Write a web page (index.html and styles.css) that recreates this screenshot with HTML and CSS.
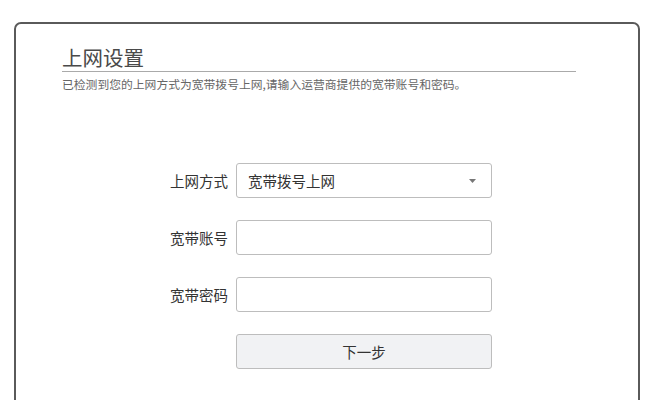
FILE: index.html
```html
<!DOCTYPE html>
<html lang="zh">
<head>
<meta charset="utf-8">
<link rel="stylesheet" href="styles.css">
</head>
<body>
<div class="card">
  <div class="header">
    <h1 class="title">上网设置</h1>
    <p class="subtitle">已检测到您的上网方式为宽带拨号上网,请输入运营商提供的宽带账号和密码。</p>
  </div>
  <div class="form">
    <div class="row">
      <span class="label">上网方式</span>
      <div class="field select">
        <span>宽带拨号上网</span>
        <svg class="arrow" width="7" height="4" viewBox="0 0 7 4"><path d="M0 0h7L3.5 4z" fill="#777"/></svg>
      </div>
    </div>
    <div class="row">
      <span class="label">宽带账号</span>
      <div class="field"></div>
    </div>
    <div class="row">
      <span class="label">宽带密码</span>
      <div class="field"></div>
    </div>
    <div class="row">
      <span class="label"></span>
      <div class="field button">下一步</div>
    </div>
  </div>
</div>
</body>
</html>
```

FILE: styles.css
```css
html, body {
  margin: 0;
  padding: 0;
  background: #fff;
  height: 400px;
  overflow: hidden;
}
body {
  font-family: "Noto Sans CJK SC", "Noto Sans", sans-serif;
  padding: 22px 19px 0 14px;
}
.card {
  border: 2px solid #5a5a5a;
  border-radius: 7px;
  height: 420px;
  padding: 20px 62px 0 46px;
}
.header {
  width: 514px;
}
.title {
  margin: 0;
  font-size: 20.5px;
  font-weight: 400;
  line-height: 27px;
  color: #4a4a4a;
  border-bottom: 1px solid #aaa;
  padding-bottom: 0;
}
.subtitle {
  margin: 3px 0 0;
  font-size: 11.8px;
  line-height: 17px;
  color: #666;
}
.form {
  margin-top: 71px;
  display: flex;
  flex-direction: column;
  gap: 22px;
}
.row {
  display: flex;
  align-items: center;
}
.label {
  width: 166px;
  margin-right: 8px;
  text-align: right;
  font-size: 14.5px;
  color: #333;
}
.field {
  width: 254px;
  height: 33px;
  border: 1px solid #bdbdbd;
  border-radius: 3px;
  background: #fff;
  box-sizing: content-box;
}
.select {
  display: flex;
  align-items: center;
  justify-content: space-between;
  padding: 0 15px 0 11px;
  width: 228px;
  font-size: 14.5px;
  color: #333;
}
.arrow {
  display: block;
}
.button {
  background: #f1f2f4;
  display: flex;
  align-items: center;
  justify-content: center;
  font-size: 14.5px;
  color: #333;
}
```
